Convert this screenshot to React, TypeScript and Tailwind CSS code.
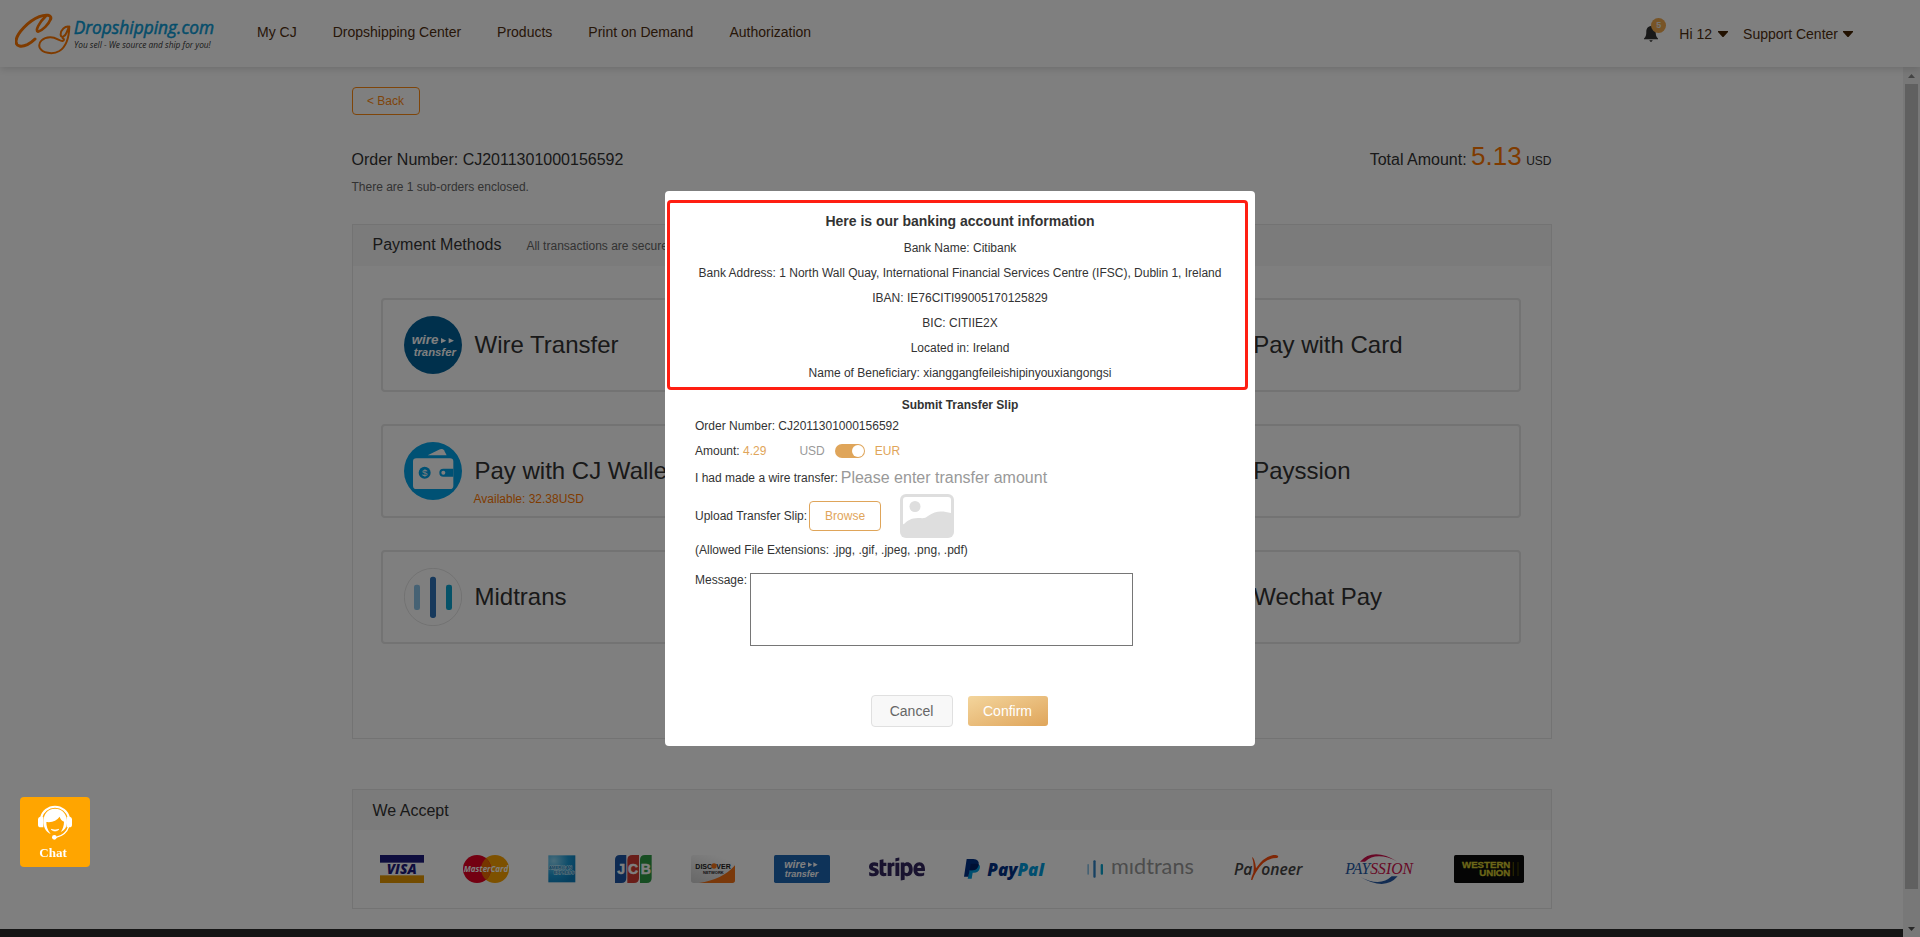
import React from "react";
import { FaStripe } from "react-icons/fa";

const navItems = ["My CJ", "Dropshipping Center", "Products", "Print on Demand", "Authorization"];

const bankDetails = [
  "Bank Name: Citibank",
  "Bank Address: 1 North Wall Quay, International Financial Services Centre (IFSC), Dublin 1, Ireland",
  "IBAN: IE76CITI99005170125829",
  "BIC: CITIIE2X",
  "Located in: Ireland",
  "Name of Beneficiary: xianggangfeileishipinyouxiangongsi",
];

function Logo() {
  return (
    <svg width="204" height="42" viewBox="45 38 612 126" aria-label="CJ Dropshipping">
      <g fill="none" stroke="#ff7700" strokeLinecap="round" strokeLinejoin="round">
        <path strokeWidth="9" d="M152 56 C156 44 138 41 118 49 C86 62 50 98 48 122 C47 140 66 140 82 133 C92 128 99 122 105 116" />
        <path strokeWidth="8" d="M152 56 C146 72 128 90 114 94 C104 92 118 66 137 48" />
        <path strokeWidth="6" d="M208 79 C196 76 181 88 182 104 C184 114 196 108 200 96 C203 88 206 82 208 79 C207 112 200 138 178 152 C158 164 126 158 119 142 C113 124 130 112 150 111 C168 110 180 124 188 122 C194 120 192 114 188 114" />
      </g>
      <text x="221" y="100" fontFamily="'Open Sans'" fontStyle="italic" fontSize="52" fill="#0a9bd6" stroke="#0a9bd6" strokeWidth="1.500">Dropshipping.com</text>
      <text x="222" y="143" fontFamily="'Open Sans'" fontStyle="italic" fontWeight="500" fontSize="25" fill="#333333">You sell - We source and ship for you!</text>
    </svg>
  );
}

function Caret() {
  return (
    <svg width="10" height="6" viewBox="0 0 10 6" aria-hidden="true">
      <path d="M0 0 H10 V1 L5.500 6 H4.500 L0 1 Z" fill="#442200" />
    </svg>
  );
}

function Header() {
  return (
    <header className="relative z-10 flex h-[67px] shrink-0 items-center bg-white pr-[67px] pl-[15px] text-sm text-[#4f2e10] shadow-[0_2px_8px_rgba(0,0,0,0.15)]">
      <a href="#home" className="mt-px block">
        <Logo />
      </a>
      <nav className="ml-[38px] flex gap-9 pb-1">
        {navItems.map((item) => (
          <a key={item} href="#nav">{item}</a>
        ))}
      </nav>
      <div className="ml-auto flex items-center">
        <button type="button" aria-label="Notifications" className="relative mr-[21px] block">
          <svg width="14" height="16" viewBox="0 0 14 16" aria-hidden="true">
            <path d="M7 0 C3.500 0.500 2.300 3 2.300 6 C2.300 9 1.800 11 0 12.500 V13.300 H14 V12.500 C12.200 11 11.700 9 11.700 6 C11.700 3 10.500 0.500 7 0 Z M5.200 14.300 H8.800 L7.600 15.800 H6.400 Z" fill="#333" />
          </svg>
          <span className="absolute -top-2 left-[7px] flex size-[15px] items-center justify-center rounded-full bg-[#f0a84c] text-[9px] font-bold text-[#e8e8e8]">5</span>
        </button>
        <button type="button" className="flex items-center gap-1.5">Hi 12 <Caret /></button>
        <button type="button" className="ml-[15px] flex items-center gap-[5px]">Support Center <Caret /></button>
      </div>
    </header>
  );
}

function WireIcon() {
  return (
    <svg width="58" height="58" viewBox="0 0 174 174" aria-hidden="true">
      <circle cx="87" cy="87" r="87" fill="#006098" />
      <g fill="#fff" fontStyle="italic" fontWeight="700">
        <text x="23" y="84" fontSize="40" fontFamily="'Liberation Sans'">wire</text>
        <text x="29" y="120" fontSize="34" fontFamily="'Liberation Sans'">transfer</text>
      </g>
      <path d="M111 66 L127 74 L111 82 Z M134 66 L150 74 L134 82 Z" fill="#fff" />
    </svg>
  );
}

function WalletIcon() {
  return (
    <svg width="58" height="58" viewBox="0 0 174 174" aria-hidden="true">
      <circle cx="87" cy="87" r="87" fill="#00a2e8" />
      <path d="M71 40 L108 22 Q116 19 120 25 L128 40 Z" fill="#fff" />
      <rect x="27" y="49" width="121" height="92" rx="10" fill="#fff" />
      <path d="M148 80 H118 a12 12 0 0 0 0 24 H148 Z" fill="#00a2e8" />
      <circle cx="118" cy="92" r="6" fill="#fff" />
      <circle cx="62" cy="92" r="18" fill="#00a2e8" />
      <text x="62" y="102" textAnchor="middle" fontFamily="'Liberation Sans'" fontSize="29" fill="#fff">$</text>
    </svg>
  );
}

function MidtransIcon() {
  return (
    <svg width="58" height="58" viewBox="0 0 174 174" aria-hidden="true">
      <circle cx="87" cy="87" r="86" fill="none" stroke="#e5e5e5" strokeWidth="3" />
      <rect x="30" y="50" width="18" height="76" rx="7" fill="#8cc4e8" />
      <rect x="78" y="26" width="18" height="124" rx="8" fill="#2f72b9" />
      <rect x="126" y="50" width="18" height="76" rx="7" fill="#0ba5d0" />
    </svg>
  );
}

type Method = { name?: string; icon?: React.ReactNode; note?: string };

const methods: Method[] = [
  { name: "Wire Transfer", icon: <WireIcon /> },
  {},
  { name: "Pay with Card" },
  { name: "Pay with CJ Wallet", icon: <WalletIcon />, note: "Available: 32.38USD" },
  {},
  { name: "Payssion" },
  { name: "Midtrans", icon: <MidtransIcon /> },
  {},
  { name: "Wechat Pay" },
];

function MethodCard({ name, icon, note }: Method) {
  return (
    <div className="relative flex h-[94px] items-center gap-[13px] rounded border-2 border-[#e6e6e6] pl-[21px]">
      <div className="size-[58px] shrink-0">{icon}</div>
      <div className="text-2xl whitespace-nowrap">{name}</div>
      {note && <div className="absolute bottom-[9px] left-[91px] text-xs text-[#ff7700]">{note}</div>}
    </div>
  );
}

function AcceptedLogos() {
  return (
    <div className="flex h-[78px] items-center justify-between px-[27px]">
      <svg width="44" height="28" viewBox="0 0 132 84" role="img" aria-label="Visa">
        <rect width="132" height="23" fill="#1d1a7d" />
        <rect y="61" width="132" height="23" fill="#e79800" />
        <text x="65" y="57" textAnchor="middle" fontFamily="'Open Sans'" fontWeight="800" fontStyle="italic" fontSize="41" fill="#1d1a7d">VISA</text>
      </svg>
      <svg width="46" height="28" viewBox="0 0 138 84" role="img" aria-label="MasterCard">
        <circle cx="96" cy="42" r="42" fill="#fba300" />
        <circle cx="42" cy="42" r="42" fill="#e60023" />
        <path d="M69 10 A42 42 0 0 1 69 74 A42 42 0 0 1 69 10" fill="#ec6a00" />
        <text x="69" y="51" textAnchor="middle" fontFamily="'Open Sans'" fontWeight="700" fontStyle="italic" fontSize="24" fill="#fff">MasterCard</text>
      </svg>
      <svg width="28" height="28" viewBox="0 0 84 84" role="img" aria-label="American Express">
        <defs>
          <radialGradient id="amex" cx="0.2" cy="0.2" r="0.9">
            <stop offset="0" stopColor="#8fd8f5" />
            <stop offset="0.6" stopColor="#1b9ad6" />
            <stop offset="1" stopColor="#0b7fbe" />
          </radialGradient>
        </defs>
        <rect x="1" y="1" width="81" height="81" fill="url(#amex)" />
        <g fill="#0b7fbe" stroke="#d8f1fb" strokeWidth="2.500" paintOrder="stroke" fontFamily="'Liberation Sans'" fontWeight="700" fontSize="13">
          <text x="2" y="43">AMERICAN</text>
          <text x="17" y="58">EXPRESS</text>
        </g>
      </svg>
      <svg width="37" height="28" viewBox="0 0 111 84" role="img" aria-label="JCB">
        <path d="M0 15 Q0 0 15 0 H34 V69 Q34 84 19 84 H0 Z" fill="#1c55a5" />
        <path d="M37 15 Q37 0 52 0 H72 V69 Q72 84 57 84 H37 Z" fill="#d33a33" />
        <path d="M75 15 Q75 0 90 0 H110 V69 Q110 84 95 84 H75 Z" fill="#2f9a45" />
        <g fill="#fff" stroke="#fff" strokeWidth="1.500" fontFamily="'Liberation Sans'" fontWeight="700" fontSize="42">
          <text x="7" y="57">J</text>
          <text x="39" y="57">C</text>
          <text x="77" y="57">B</text>
        </g>
      </svg>
      <svg width="44" height="28" viewBox="0 0 132 84" role="img" aria-label="Discover Network">
        <defs>
          <linearGradient id="disc" x1="0" y1="1" x2="0.6" y2="0">
            <stop offset="0" stopColor="#cfcfcf" />
            <stop offset="1" stopColor="#ffffff" />
          </linearGradient>
        </defs>
        <rect width="132" height="84" rx="8" fill="url(#disc)" />
        <path d="M132 31 V76 Q132 84 124 84 H24 Q95 74 132 31 Z" fill="#f47216" />
        <g fontFamily="'Liberation Sans'" fontWeight="700" fill="#222">
          <text x="13" y="41" fontSize="21">DISC</text>
          <text x="76" y="41" fontSize="21">VER</text>
          <text x="36" y="56" fontSize="12">NETWORK</text>
        </g>
        <circle cx="69" cy="33" r="8" fill="#f47216" />
      </svg>
      <svg width="56" height="28" viewBox="0 0 168 84" role="img" aria-label="Wire transfer">
        <rect width="168" height="84" rx="5" fill="#1d66b3" />
        <g fill="#fff" fontFamily="'Liberation Sans'" fontStyle="italic" fontWeight="700">
          <text x="31" y="39" fontSize="32">wire</text>
          <text x="32" y="66" fontSize="27">transfer</text>
        </g>
        <path d="M102 22 L115 29 L102 36 Z M118 22 L131 29 L118 36 Z" fill="#fff" />
      </svg>
      <FaStripe className="h-[56px] w-[56px] text-[#32265f]" aria-label="Stripe" />
      <svg width="84" height="28" viewBox="0 -12 252 84" role="img" aria-label="PayPal">
        <path d="M20 14 H38 Q51 16 47 29 Q43 41 30 41 H26 L23 59 H11 Z" fill="#009cde" />
        <path d="M8 0 H28 Q47 1 44 18 Q40 34 24 34 H17 L13 53 H0 Z" fill="#003087" />
        <path d="M20 14 H38 Q42 14 44 17 Q40 34 24 34 H17 Z" fill="#012169" />
        <text x="70" y="51" fontFamily="'Open Sans'" fontWeight="800" fontStyle="italic" fontSize="51">
          <tspan fill="#003087">Pay</tspan>
          <tspan fill="#009cde">Pal</tspan>
        </text>
      </svg>
      <svg width="108" height="28" viewBox="0 -9 324 84" role="img" aria-label="Midtrans">
        <rect x="1" y="18" width="5" height="32" rx="2" fill="#8cc4e8" />
        <rect x="19" y="7" width="7" height="52" rx="3" fill="#2f82c4" />
        <rect x="41" y="18" width="7" height="32" rx="3" fill="#0ba5d0" />
        <text x="72" y="49" fontFamily="Lato" fontSize="65" fill="#999">mıdtrans</text>
      </svg>
      <svg width="72" height="28" viewBox="0 0 216 84" role="img" aria-label="Payoneer">
        <g fontFamily="'Open Sans'" fontWeight="600" fontStyle="italic" fontSize="47" fill="#444">
          <text x="0" y="59">Pa</text>
          <text x="82" y="59">oneer</text>
        </g>
        <path d="M54 6 Q62 8 66 40 Q88 6 118 0 Q130 -1 133 4 L130 9 Q90 8 66 52 Q60 62 55 75 L51 75 Q52 66 58 53 Q62 30 54 6 Z" fill="#ff4e0d" />
      </svg>
      <svg width="70" height="32" viewBox="0 0 210 96" role="img" aria-label="Payssion">
        <path d="M45 26 Q85 -18 158 26 Q95 -6 60 26 Z" fill="#d0104c" />
        <path d="M158 70 Q120 115 45 71 Q105 103 140 70 Z" fill="#2559a5" />
        <text x="1" y="63" fontFamily="'Liberation Serif'" fontStyle="italic" fontSize="47">
          <tspan fill="#2559a5">PAY</tspan>
          <tspan fill="#d0104c">SSION</tspan>
        </text>
      </svg>
      <svg width="70" height="28" viewBox="0 0 210 84" role="img" aria-label="Western Union">
        <rect width="210" height="84" rx="5" fill="#0a0a0a" />
        <g fontFamily="'Liberation Sans'" fontWeight="700" fontSize="29" fill="#d8cc30" stroke="#d8cc30" strokeWidth="1">
          <text x="169" y="40" textAnchor="end">WESTERN</text>
          <text x="169" y="63" textAnchor="end">UNION</text>
        </g>
        <rect x="176" y="21" width="4" height="42" fill="#4a4500" />
        <rect x="190" y="21" width="4" height="42" fill="#3a3600" />
      </svg>
    </div>
  );
}

function ScrollTrack() {
  return (
    <div className="flex w-[17px] shrink-0 flex-col items-center bg-[#f1f1f1]" aria-hidden="true">
      <svg width="7" height="17" viewBox="0 0 7 17"><path d="M0 11 L3.500 7 L7 11 Z" fill="#888" /></svg>
      <div className="w-[13px] flex-1 bg-[#c1c1c1]" />
      <div className="h-[31px]" />
      <svg width="7" height="17" viewBox="0 0 7 17"><path d="M0 7 L3.500 11 L7 7 Z" fill="#505050" /></svg>
    </div>
  );
}

function TransferDialog() {
  return (
    <div role="dialog" aria-label="Wire transfer" className="relative w-[590px] rounded bg-white text-xs text-[#333]">
      <section className="mx-5 border-b border-[#dddddd] pt-4 pb-px text-center">
        <h2 className="mb-px text-sm leading-7 font-bold">Here is our banking account information</h2>
        {bankDetails.map((line) => (
          <p key={line} className="leading-[25px] whitespace-nowrap">{line}</p>
        ))}
      </section>
      <div className="pointer-events-none absolute top-[9px] right-[7px] left-0.5 h-[190px] rounded border-[3px] border-[#ff1e12]" />

      <form className="px-[30px] pt-[7px] pb-[19px]" onSubmit={(e) => e.preventDefault()}>
        <h3 className="text-center leading-5 font-bold">Submit Transfer Slip</h3>
        <p className="leading-[22px]">Order Number: CJ2011301000156592</p>
        <div className="flex h-7 items-center">
          <span>Amount: <span className="text-[#dfa55a]">4.29</span></span>
          <span className="ml-[33px] text-[#999]">USD</span>
          <label className="mx-2.5 flex h-3.5 w-[30px] cursor-pointer items-center justify-end rounded-full bg-[#dfa55a] px-px">
            <input type="checkbox" defaultChecked aria-label="Use EUR" className="sr-only" />
            <span className="size-3 rounded-full bg-white" />
          </label>
          <span className="text-[#dfa55a]">EUR</span>
        </div>
        <div className="flex h-[26px] items-center gap-[3px]">
          <label htmlFor="amount">I had made a wire transfer:</label>
          <input id="amount" type="text" placeholder="Please enter transfer amount" className="h-6 w-60 text-base outline-none placeholder:text-[#999]" />
        </div>
        <div className="flex h-[50px] items-center">
          <span className="mr-0.5">Upload Transfer Slip:</span>
          <button type="button" className="h-[30px] w-[72px] rounded border border-[#dfa55a] text-[#dfa55a]">Browse</button>
          <svg className="ml-[19px]" width="54" height="44" viewBox="0 0 54 44" aria-hidden="true">
            <rect width="54" height="44" rx="6" fill="#dedede" />
            <path d="M6 3 H48 Q51 3 51 6 V19 C43 17 36 16 28 22 C25 25 22 24 18 24 C11 24 7 27 4 30 Q3 31 3 29 V6 Q3 3 6 3 Z" fill="#fff" />
            <circle cx="15" cy="12.500" r="5.500" fill="#dedede" />
          </svg>
        </div>
        <p className="leading-[18px]">(Allowed File Extensions: .jpg, .gif, .jpeg, .png, .pdf)</p>
        <div className="mt-3.5 flex gap-[3px]">
          <label htmlFor="message" className="leading-3.5">Message:</label>
          <textarea id="message" className="block h-[73px] w-[383px] resize-none border border-[#767676] outline-none" />
        </div>
        <div className="mt-[49px] flex items-center justify-center gap-[15px] pr-0.5 text-sm">
          <button type="button" className="h-8 w-[82px] rounded border border-[#e0e0e0] bg-[#f8f8f8] text-[#666]">Cancel</button>
          <button type="submit" className="h-[30px] w-20 rounded-[3px] bg-linear-to-br from-[#f3d59c] to-[#dfa55a] text-white">Confirm</button>
        </div>
      </form>
    </div>
  );
}

function ChatButton() {
  return (
    <button type="button" className="fixed bottom-[70px] left-5 z-30 flex size-[70px] flex-col items-center rounded bg-[#ffa500] pt-[7px] text-white">
      <svg width="34" height="36" viewBox="0 0 102 108" aria-hidden="true">
        <path d="M9 42 A43 43 0 0 1 93 42" fill="none" stroke="#fff" strokeWidth="6" />
        <path d="M6 38 H16 V70 H8 Q0 70 0 62 V46 Q0 40 6 38 Z M96 38 H86 V70 H94 Q102 70 102 62 V46 Q102 40 96 38 Z" fill="#fff" />
        <path d="M51 14 C28 14 15 32 16 56 C18 74 26 84 38 90 C28 78 25 66 25 54 C44 56 56 50 65 38 C67 46 72 50 78 53 C78 66 74 76 68 84 C80 78 86 70 87 56 C88 32 74 14 51 14 Z" fill="#fff" />
        <path d="M39 76 Q51 86 63 76 Q51 80 39 76 Z" fill="#fff" stroke="#fff" strokeWidth="2" />
        <path d="M92 68 Q84 94 54 100" fill="none" stroke="#fff" strokeWidth="4" />
        <circle cx="49" cy="100" r="7" fill="#fff" />
      </svg>
      <span className="mr-1 font-['Liberation_Serif',serif] text-[13px] leading-[26px] font-bold">Chat</span>
    </button>
  );
}

export default function App() {
  return (
    <div className="flex h-screen flex-col overflow-hidden bg-white font-['Liberation_Sans',Arial,sans-serif] text-[#333]">
      <Header />
      <div className="flex min-h-0 flex-1">
        <div className="min-w-0 flex-1 overflow-hidden">
          <main className="mx-auto max-w-[1200px] pt-5 pb-5">
            <button type="button" className="block h-7 w-[68px] rounded border border-[#ff8a12] text-xs text-[#ff8a12]">&lt; Back</button>
            <div className="mt-[26px] flex h-[33px] items-baseline justify-between leading-[30px]">
              <h1>Order Number: CJ2011301000156592</h1>
              <p>Total Amount: <span className="text-[26px] text-[#ff7700]">5.13</span> <span className="text-xs">USD</span></p>
            </div>
            <p className="text-xs leading-[26px] text-[#666]">There are 1 sub-orders enclosed.</p>

            <section className="mt-6 border border-[#e6e6e6]">
              <div className="flex items-baseline gap-[25px] bg-[#f7f7f7] px-5 pb-0.5 leading-[39px]">
                <h2>Payment Methods</h2>
                <p className="text-xs text-[#666]">All transactions are secured</p>
              </div>
              <div className="grid grid-cols-3 gap-x-7 gap-y-8 pt-8 pr-[30px] pb-[94px] pl-7">
                {methods.map((method, i) => (
                  <MethodCard key={i} {...method} />
                ))}
              </div>
            </section>

            <section className="mt-[50px] border border-[#e6e6e6]">
              <h2 className="bg-[#f7f7f7] px-5 pt-0.5 leading-[38px]">We Accept</h2>
              <AcceptedLogos />
            </section>
          </main>
          <footer className="h-40 bg-[#2b2b2b]" />
        </div>
        <ScrollTrack />
      </div>

      <div className="fixed inset-0 z-20 flex items-center justify-center bg-black/50">
        <TransferDialog />
      </div>
      <ChatButton />
    </div>
  );
}
